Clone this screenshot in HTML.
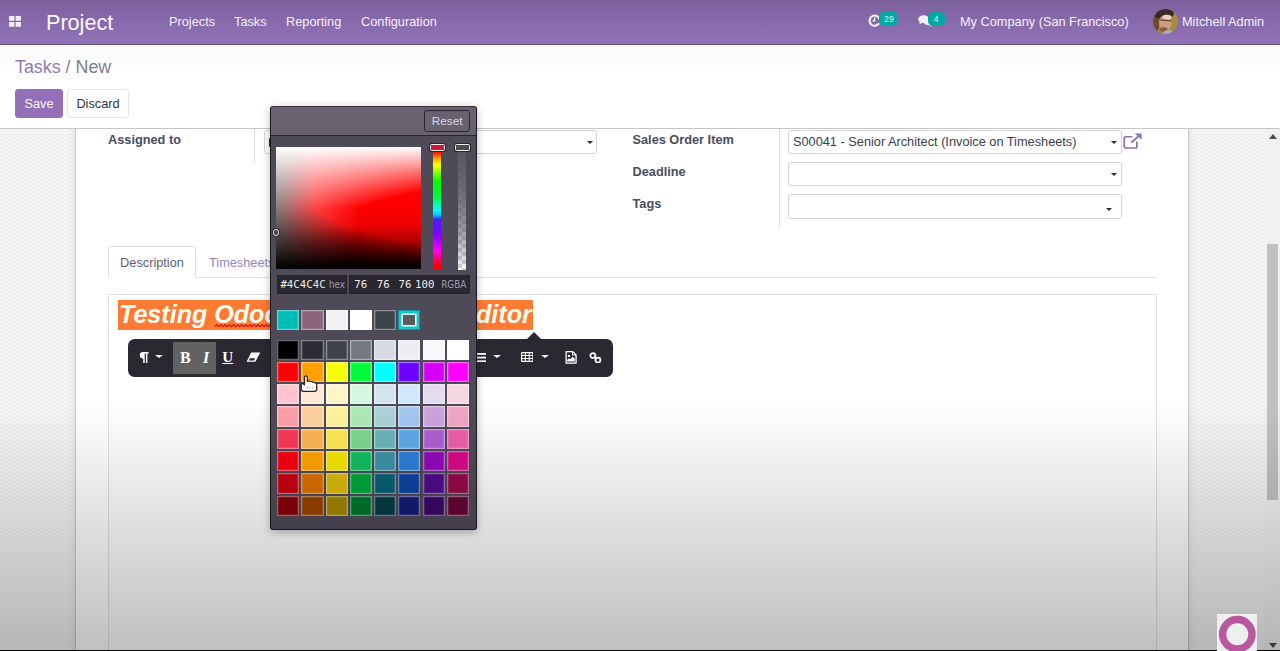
<!DOCTYPE html>
<html lang="en">
<head>
<meta charset="utf-8">
<title>Odoo - Tasks / New</title>
<style>
*{box-sizing:border-box;margin:0;padding:0}
html,body{width:1280px;height:651px;overflow:hidden;background:#fff}
body{position:relative;font-family:"Liberation Sans",Arial,sans-serif;font-size:12.75px;color:#4c4c4c;line-height:1.5}
.abs{position:absolute}
/* ---------- navbar ---------- */
#navbar{position:absolute;left:0;top:0;width:1280px;height:45px;background:linear-gradient(to bottom,#7a609b 0%,#8366a6 30%,#9174b7 100%);border-bottom:1px solid #64507f;color:#f3ecfa}
#navbar .apps{position:absolute;left:9px;top:16px;width:12px;height:11px}
#navbar .brand{position:absolute;left:46px;top:7.6px;font-size:21.6px;line-height:30px;color:#fbf7ff;white-space:nowrap}
#navbar .menu{position:absolute;top:0;height:44px;line-height:44.2px;font-size:12.75px;white-space:nowrap;color:#f5effb}
#navbar .badge{position:absolute;top:12px;height:14px;border-radius:5px;background:#04a8a2;color:#c9fbfa;font-size:8.6px;line-height:14px;text-align:center}
#avatar{position:absolute;left:1153px;top:9px;width:25px;height:25px;border-radius:50%;overflow:hidden;background:#8a6a45}
/* ---------- control panel ---------- */
#cp{position:absolute;left:0;top:45px;width:1280px;height:84px;background:#fff;border-bottom:1px solid #c6c6c6}
#cp .crumb{position:absolute;left:15px;top:9px;font-size:17.85px;line-height:27px;white-space:nowrap;color:#7c7f89}
#cp .crumb a{color:#8f7bb8;text-decoration:none}
.btn{position:absolute;top:44px;height:29px;border-radius:3px;font-size:12.75px;line-height:27px;text-align:center;border:1px solid transparent;white-space:nowrap}
.btn-primary{left:15px;width:48px;background:#9370b8;border-color:#9370b8;color:#fbf7ff}
.btn-secondary{left:67px;width:62px;background:#fff;border-color:#e6e6ea;color:#2f3246}
/* ---------- content ---------- */
#content{position:absolute;left:0;top:129px;width:1265px;height:522px;overflow:hidden;
 background-color:#f8f8f8;
 background-image:linear-gradient(45deg,#eeeeee 25%,transparent 25%,transparent 75%,#eeeeee 75%),linear-gradient(45deg,#eeeeee 25%,transparent 25%,transparent 75%,#eeeeee 75%);
 background-size:4px 4px;background-position:0 0,2px 2px}
#sheet{position:absolute;left:75px;top:-1px;width:1114px;height:560px;background:#fff;border:1px solid #c8c8d2;box-shadow:0 0 6px rgba(90,90,120,.18)}
.lbl{position:absolute;font-weight:bold;font-size:12.75px;line-height:20px;color:#4a4d5e;white-space:nowrap}
.vsep{position:absolute;width:1px;background:#dcdcdc}
.inp{position:absolute;height:24px;border:1px solid #d5d5d8;border-radius:3px;background:#fff;font-size:12.75px;line-height:22px;color:#3a3d4c;padding-left:4px;white-space:nowrap;overflow:hidden}
.caret{position:absolute;width:0;height:0;border-left:3.8px solid transparent;border-right:3.8px solid transparent;border-top:3.8px solid #2d2d2d;margin:.8px 0 0 .6px}
/* tabs */
#tabs{position:absolute;left:32px;top:117px;width:1049px;height:32px;border-bottom:1px solid #dee2e6}
#tabs .tab{position:absolute;top:0;height:32px;line-height:31px;font-size:12.75px;white-space:nowrap}
#tabs .active{left:0;width:88px;text-align:center;border:1px solid #dee2e6;border-bottom-color:#fff;border-radius:3px 3px 0 0;background:#fff;color:#5e6170}
#tabs .other{left:101px;top:1px;color:#9585be}
#editor{position:absolute;left:32px;top:165px;width:1049px;height:400px;border:1px solid #e2e2e2;background:#fff}
#editor h2{position:absolute;left:9px;top:4.6px;height:30px;font-size:25.1px;line-height:28.4px;font-weight:bold;font-style:italic;color:#fffdf0;background:#ff7a33;white-space:nowrap;padding:0 1px}
#editor h2 u{text-decoration:none}
#editor h2 svg{position:absolute;left:96.6px;top:24.2px}
/* toolbar */
#toolbar{position:absolute;left:128px;top:339px;width:484.9px;height:37.6px;border-radius:6.5px;background:#2c2831;color:#fff}
#toolbar .tip{position:absolute;left:399px;top:-7px;width:0;height:0;border-left:7px solid transparent;border-right:7px solid transparent;border-bottom:7px solid #2c2831}
#toolbar .on{position:absolute;left:45px;top:3px;width:43px;height:32px;background:#626262}
#toolbar svg{position:absolute}
#toolbar .tc{position:absolute;width:0;height:0;border-left:4px solid transparent;border-right:4px solid transparent;border-top:3.6px solid #fff;top:16px}
#toolbar .g{position:absolute;font-family:"Liberation Serif","DejaVu Serif",serif;font-size:16px;line-height:20px;color:#fff;top:9.3px}
/* colour picker popover */
#picker{position:absolute;left:270px;top:106px;width:207px;height:423.6px;background:#4f4a57;border:1px solid #1c191f;border-top-color:#37333c;border-radius:3px;box-shadow:0 2px 9px rgba(0,0,0,.28)}
#picker .head{position:absolute;left:0;top:0;width:205px;height:29px;background:#676170;border-bottom:1px solid #2a2630;border-radius:2px 2px 0 0}
#picker .reset{position:absolute;left:153.4px;top:3.4px;width:45.6px;height:21.4px;border:1px solid #2a2630;border-radius:3px;background:#676170;color:#ddd8e2;font-size:11.75px;line-height:19.4px;text-align:center}
#sv{position:absolute;left:5.3px;top:40px;width:145px;height:122px;background-color:#f00;background-image:linear-gradient(to bottom,#fff 0%,rgba(255,255,255,0) 50%,rgba(0,0,0,0) 50%,#000 100%),linear-gradient(to right,#808080 0%,rgba(128,128,128,0) 100%);filter:saturate(2.7)}
#svd{position:absolute;left:5.3px;top:40px;width:145px;height:122px;background:linear-gradient(to bottom,rgba(0,0,0,0) 50%,rgba(0,0,0,.07) 64%,rgba(0,0,0,.36) 80%,rgba(0,0,0,.52) 90%,rgba(0,0,0,.7) 100%);-webkit-mask-image:linear-gradient(to right,rgba(0,0,0,0) 0%,#000 55%);mask-image:linear-gradient(to right,rgba(0,0,0,0) 0%,#000 55%)}
#svp{position:absolute;left:1.5px;top:122.3px;width:6.8px;height:6.8px;border-radius:50%;border:1.5px solid #e6e6e6;box-shadow:0 0 0 1px rgba(40,40,40,.8),inset 0 0 0 1px rgba(40,40,40,.8)}
#hue{position:absolute;left:162px;top:41px;width:8.4px;height:122px;background:linear-gradient(to bottom,#f00 0%,#f00 3%,#ffb000 9%,#ff0 14%,#0f0 27%,#00f840 40%,#0ff 51%,#00c8ff 55%,#4a1cff 58.5%,#7a00ff 70%,#f0f 84%,#f00 96%,#f00 100%)}
#alpha{position:absolute;left:187px;top:41px;width:8.4px;height:122px;background-color:#fff;
 background-image:linear-gradient(to bottom,#58545e 0%,rgba(88,84,94,.86) 35%,rgba(88,84,94,.62) 65%,rgba(88,84,94,.18) 92%,rgba(88,84,94,0) 100%),linear-gradient(45deg,#d4d4d4 25%,transparent 25%,transparent 75%,#d4d4d4 75%),linear-gradient(45deg,#d4d4d4 25%,transparent 25%,transparent 75%,#d4d4d4 75%);
 background-size:auto,8px 8px,8px 8px;background-position:0 0,0 0,4px 4px}
.hdl{position:absolute;top:36.5px;width:15px;height:7px;border:1.2px solid #f1f1f1;border-radius:1.5px;box-shadow:0 0 0 1px #2a2630}
.cbox{position:absolute;top:168.1px;height:19.3px;background:#2b2730;border:1px solid #26222b;color:#eee;font-family:"DejaVu Sans Mono","Liberation Mono",monospace;font-size:10.75px;line-height:17.6px;white-space:pre}
.cbox b{position:absolute;top:0;font-weight:normal;text-align:right}
.cbox i{position:absolute;top:0;font-style:normal;font-family:"DejaVu Sans Condensed","DejaVu Sans","Liberation Sans",sans-serif;color:#a29ea9;font-size:9.8px}
.sw{position:absolute;width:24.2px;height:22.3px;border:solid #4f4a57;border-width:.7px .6px;box-shadow:inset 0 0 0 1.3px rgba(255,255,255,.4)}
.sw.sel{box-shadow:inset 0 0 0 1px #0e94a2,inset 0 0 0 3.4px #14c6cb,inset 0 0 0 5px #e4ffff}
#cursor{position:absolute;left:300px;top:374px;width:18px;height:20px}
/* overlays */
#scroll{position:absolute;left:1265px;top:129px;width:15px;height:522px;background:#f1f1f1}
#scroll .thumb{position:absolute;left:2px;top:115px;width:11px;height:256px;background:#c1c1c1}
#shade-top{position:absolute;left:0;top:46px;width:1280px;height:24px;background:linear-gradient(to bottom,rgba(0,0,0,.022),rgba(0,0,0,0));pointer-events:none}
#shade-bot{position:absolute;left:0;top:400px;width:1280px;height:251px;background:linear-gradient(to bottom,rgba(0,0,0,0),rgba(0,0,0,.25));pointer-events:none}
#botline{position:absolute;left:0;top:650px;width:1280px;height:1px;background:#050505}
#wm{position:absolute;left:1217px;top:614px;width:40px;height:37px;background:#efefef;overflow:hidden}
</style>
</head>
<body>

<!-- ================= NAVBAR ================= -->
<div id="navbar">
  <svg class="apps" viewBox="0 0 12 11"><rect x="0" y="0" width="5.4" height="4.8" rx=".6" fill="#f4eefa"/><rect x="6.6" y="0" width="5.4" height="4.8" rx=".6" fill="#f4eefa"/><rect x="0" y="6" width="5.4" height="4.8" rx=".6" fill="#f4eefa"/><rect x="6.6" y="6" width="5.4" height="4.8" rx=".6" fill="#f4eefa"/></svg>
  <div class="brand">Project</div>
  <div class="menu" style="left:169px">Projects</div>
  <div class="menu" style="left:234px">Tasks</div>
  <div class="menu" style="left:286px">Reporting</div>
  <div class="menu" style="left:361px">Configuration</div>

  <svg class="abs" style="left:868.2px;top:14.4px" width="13" height="13" viewBox="0 0 13 13"><path d="M10.6 9.9A5.1 5.1 0 1 1 11.6 5.4" fill="none" stroke="#f4eefa" stroke-width="2.1" stroke-linecap="round"/><path d="M6.6 3.6V6.8H4.6" fill="none" stroke="#f4eefa" stroke-width="1.4"/></svg>
  <div class="badge" style="left:879.4px;width:19px">29</div>
  <svg class="abs" style="left:918px;top:15px" width="15" height="12" viewBox="0 0 15 12"><ellipse cx="5.6" cy="4.2" rx="5.4" ry="3.9" fill="#f4eefa"/><path d="M2 6.5L1.2 9.6L4.8 7.6Z" fill="#f4eefa"/><ellipse cx="10.2" cy="7" rx="4.2" ry="3" fill="#f4eefa"/><path d="M12 9.2L13.8 11.6L10 10Z" fill="#f4eefa"/></svg>
  <div class="badge" style="left:927.6px;width:17.2px">4</div>
  <div class="menu" style="left:960px">My Company (San Francisco)</div>
  <div id="avatar">
    <svg width="25" height="25" viewBox="0 0 25 25"><defs><filter id="avb" x="-10%" y="-10%" width="120%" height="120%"><feGaussianBlur stdDeviation=".75"/></filter></defs><rect width="25" height="25" fill="#a58c3e"/><g filter="url(#avb)"><rect x="-2" y="-2" width="29" height="29" fill="#a58c3e"/><ellipse cx="2.5" cy="13" rx="4" ry="10" fill="#6e4a2c"/><ellipse cx="10.5" cy="4.6" rx="10.5" ry="5.6" fill="#382b2a"/><ellipse cx="12.3" cy="14" rx="6.2" ry="8.2" fill="#cd9c84"/><ellipse cx="14.2" cy="8.3" rx="4.4" ry="2.5" fill="#edd2c4"/><path d="M7.4 10.8L18.2 11.8" stroke="#5a4038" stroke-width="1.3"/><ellipse cx="10.6" cy="20.4" rx="4" ry="2.2" fill="#8a583e"/><ellipse cx="15.4" cy="24.2" rx="5.2" ry="3.2" fill="#a6aebe"/></g></svg>
  </div>
  <div class="menu" style="left:1182px">Mitchell Admin</div>
</div>

<!-- ================= CONTROL PANEL ================= -->
<div id="cp">
  <div class="crumb"><a>Tasks</a> / New</div>
  <div class="btn btn-primary">Save</div>
  <div class="btn btn-secondary">Discard</div>
</div>

<!-- ================= CONTENT ================= -->
<div id="content">
  <div id="sheet">
    <div class="lbl" style="left:32px;top:1px">Assigned to</div>
    <div class="vsep" style="left:178px;top:0;height:33px"></div>
    <div class="inp" style="left:188px;top:1px;width:333px"></div>
    <div class="caret" style="left:510px;top:11px"></div>
    <div class="abs" style="left:193.2px;top:9px;width:2px;height:9px;background:#2a2a30;border-radius:1px"></div>

    <div class="lbl" style="left:556.5px;top:1px">Sales Order Item</div>
    <div class="lbl" style="left:556.5px;top:33px">Deadline</div>
    <div class="lbl" style="left:556.5px;top:65px">Tags</div>
    <div class="vsep" style="left:703px;top:0;height:98px"></div>
    <div class="inp" style="left:712px;top:1px;width:334px">S00041 - Senior Architect (Invoice on Timesheets)</div>
    <div class="caret" style="left:1034px;top:11px"></div>
    <svg class="abs" style="left:1046.4px;top:3px" width="21.5" height="18" viewBox="0 0 19 18" preserveAspectRatio="none"><path d="M13.2 10.2V14.4Q13.2 16 11.6 16H3.6Q2 16 2 14.4V6.4Q2 4.8 3.6 4.8H8.6" fill="none" stroke="#8e73b6" stroke-width="1.6" stroke-linecap="round"/><path d="M8.2 10.6L16 2.8" fill="none" stroke="#8e73b6" stroke-width="1.9"/><path d="M11.2 1.6H17.4V7.8Z" fill="#8e73b6"/></svg>
    <div class="inp" style="left:712px;top:33px;width:334px"></div>
    <div class="caret" style="left:1034px;top:43px"></div>
    <div class="inp" style="left:712px;top:65px;width:334px;height:25px"></div>
    <div class="caret" style="left:1029px;top:78.2px"></div>

    <div id="tabs">
      <div class="tab active">Description</div>
      <div class="tab other">Timesheets</div>
    </div>
    <div id="editor">
      <h2>Testing <u>Odoo</u> <span style="letter-spacing:.78px">Rich Content</span> Editor<svg width="64" height="4" viewBox="0 0 64 4"><path d="M0 2.6L2.05 0.7L4.1 2.6L6.15 0.7L8.2 2.6L10.25 0.7L12.3 2.6L14.35 0.7L16.4 2.6L18.45 0.7L20.5 2.6L22.55 0.7L24.6 2.6L26.65 0.7L28.7 2.6L30.75 0.7L32.8 2.6L34.85 0.7L36.9 2.6L38.95 0.7L41 2.6L43.05 0.7L45.1 2.6L47.15 0.7L49.2 2.6L51.25 0.7L53.3 2.6L55.35 0.7L57.4 2.6L59.45 0.7L61.5 2.6" fill="none" stroke="#e10f0f" stroke-width="1.25" stroke-linejoin="round"/></svg></h2>
    </div>
  </div>
</div>

<!-- ================= SCROLLBAR ================= -->
<div id="scroll">
  <svg class="abs" style="left:4px;top:5px" width="8" height="5" viewBox="0 0 8 5"><path d="M0 5L4 0L8 5Z" fill="#4d4d4d"/></svg>
  <div class="thumb"></div>
  <svg class="abs" style="left:4px;top:514px" width="8" height="5" viewBox="0 0 8 5"><path d="M0 0L4 5L8 0Z" fill="#4d4d4d"/></svg>
</div>

<!-- ================= FLOATING TOOLBAR ================= -->
<div id="toolbar">
  <div class="tip"></div>
  <div class="on"></div>
  <!-- paragraph style -->
  <svg style="left:11.4px;top:13.4px" width="10" height="11" viewBox="0 0 10 11"><path d="M4.1 0H9.6V1.5H8.4V11H6.9V1.5H5.7V11H4.2V6.6H4.1A3.3 3.3 0 0 1 4.1 0Z" fill="#fff"/></svg>
  <div class="tc" style="left:27px"></div>
  <!-- bold / italic / underline -->
  <div class="g" style="left:52px;font-weight:bold">B</div>
  <div class="g" style="left:75px;font-style:italic;font-weight:bold">I</div>
  <div class="g" style="left:94.3px;top:7.8px;font-weight:bold;font-size:15.2px;text-decoration:underline;text-underline-offset:.6px;text-decoration-thickness:1.3px">U</div>
  <!-- eraser -->
  <svg style="left:118px;top:13px" width="15" height="11" viewBox="0 0 15 11"><path d="M5.2 .6H14.2L9.4 9.8H.6Z" fill="#fff"/><path d="M3.9 6.2H9.1L8 8.4H2.7Z" fill="#2c2831"/></svg>
  <!-- font size / colours (hidden behind palette) -->
  <div class="g" style="left:150px;font-family:'Liberation Sans',sans-serif;font-size:12px">13</div>
  <div class="tc" style="left:168px"></div>
  <div class="g" style="left:196px;font-family:'Liberation Sans',sans-serif;font-size:13px;font-weight:bold">A</div>
  <div class="tc" style="left:210px"></div>
  <!-- lists / align -->
  <svg style="left:346px;top:14px" width="12" height="9.2" viewBox="0 0 12 10" preserveAspectRatio="none"><rect y="0" width="12" height="2" fill="#fff"/><rect y="4" width="12" height="2" fill="#fff"/><rect y="8" width="12" height="2" fill="#fff"/></svg>
  <div class="tc" style="left:365px"></div>
  <!-- table -->
  <svg style="left:392.5px;top:13.1px" width="12.6" height="10" viewBox="0 0 13 11" preserveAspectRatio="none"><rect x=".6" y=".6" width="11.8" height="9.8" rx="1" fill="none" stroke="#fff" stroke-width="1.3"/><path d="M.6 3.9H12.4M.6 7.1H12.4M4.5 .6V10.4M8.5 .6V10.4" stroke="#fff" stroke-width="1.1" fill="none"/></svg>
  <div class="tc" style="left:413px"></div>
  <!-- image -->
  <svg style="left:436.8px;top:12.2px" width="12" height="12.8" viewBox="0 0 13 14" preserveAspectRatio="none"><path d="M1.2 .7H8.4L12 4.3V13.2H1.2Z" fill="none" stroke="#fff" stroke-width="1.4" stroke-linejoin="round"/><path d="M8.2 .8V4.5H11.9" fill="none" stroke="#fff" stroke-width="1.1"/><circle cx="4.3" cy="5.4" r="1.3" fill="#fff"/><path d="M2.4 11.6V9.6L4.4 7.8L5.6 8.9L8.4 6.2L10.6 8.4V11.6Z" fill="#fff"/></svg>
  <!-- link -->
  <svg style="left:460.6px;top:12.7px" width="13" height="11.8" viewBox="0 0 14 13" preserveAspectRatio="none"><circle cx="4.2" cy="3.9" r="2.7" fill="none" stroke="#fff" stroke-width="1.9"/><circle cx="9.6" cy="8.9" r="2.7" fill="none" stroke="#fff" stroke-width="1.9"/><path d="M5.6 5.2L8.3 7.7" stroke="#fff" stroke-width="2" fill="none"/></svg>
</div>

<!-- ================= COLOUR PICKER ================= -->
<div id="picker">
  <div class="head"><div class="reset">Reset</div></div>
  <div id="sv"></div><div id="svd"></div><div id="svp"></div>
  <div id="hue"></div><div class="hdl" style="left:159px;background:#d4143a"></div>
  <div id="alpha"></div><div class="hdl" style="left:184px;background:#4c4c4c"></div>
  <div class="cbox" style="left:6.4px;width:69.5px"><b style="left:2px">#4C4C4C</b><i style="left:50.6px">hex</i></div>
  <div class="cbox" style="left:77.8px;width:121px"><b style="right:101.6px">76</b><b style="right:79.2px">76</b><b style="right:57.4px">76</b><b style="right:34.4px">100</b><i style="left:91.4px">RGBA</i></div>
  <div id="swatches">
  <!-- custom colours -->
  <div class="sw" style="left:5.2px;top:202px;background:#00bcb4"></div>
  <div class="sw" style="left:29.4px;top:202px;background:#8a647c"></div>
  <div class="sw" style="left:53.6px;top:202px;background:#f2f2f6"></div>
  <div class="sw" style="left:77.9px;top:202px;background:#ffffff"></div>
  <div class="sw" style="left:102.1px;top:202px;background:#3e444c"></div>
  <div class="sw sel" style="left:126.3px;top:202px;background:#5b5b5b"></div>
  <!-- palette grid -->
  <div class="sw" style="left:5.2px;top:231.5px;background:#000000"></div>
  <div class="sw" style="left:29.4px;top:231.5px;background:#2c2c35"></div>
  <div class="sw" style="left:53.6px;top:231.5px;background:#3e434b"></div>
  <div class="sw" style="left:77.9px;top:231.5px;background:#76787f"></div>
  <div class="sw" style="left:102.1px;top:231.5px;background:#d6dae2"></div>
  <div class="sw" style="left:126.3px;top:231.5px;background:#ececf2"></div>
  <div class="sw" style="left:150.5px;top:231.5px;background:#f8f8fb"></div>
  <div class="sw" style="left:174.7px;top:231.5px;background:#ffffff"></div>
  <div class="sw" style="left:5.2px;top:253.8px;background:#ff0000"></div>
  <div class="sw" style="left:29.4px;top:253.8px;background:#ffa000"></div>
  <div class="sw" style="left:53.6px;top:253.8px;background:#f6fc0a"></div>
  <div class="sw" style="left:77.9px;top:253.8px;background:#00fa38"></div>
  <div class="sw" style="left:102.1px;top:253.8px;background:#00ffff"></div>
  <div class="sw" style="left:126.3px;top:253.8px;background:#6a00ff"></div>
  <div class="sw" style="left:150.5px;top:253.8px;background:#d400f4"></div>
  <div class="sw" style="left:174.7px;top:253.8px;background:#ff00ff"></div>
  <div class="sw" style="left:5.2px;top:276.1px;background:#ffc4d2"></div>
  <div class="sw" style="left:29.4px;top:276.1px;background:#ffe8d4"></div>
  <div class="sw" style="left:53.6px;top:276.1px;background:#fff6c8"></div>
  <div class="sw" style="left:77.9px;top:276.1px;background:#d4f8e0"></div>
  <div class="sw" style="left:102.1px;top:276.1px;background:#d4e4ee"></div>
  <div class="sw" style="left:126.3px;top:276.1px;background:#d0e8fa"></div>
  <div class="sw" style="left:150.5px;top:276.1px;background:#e2dcee"></div>
  <div class="sw" style="left:174.7px;top:276.1px;background:#f4d8e0"></div>
  <div class="sw" style="left:5.2px;top:298.4px;background:#ff9fab"></div>
  <div class="sw" style="left:29.4px;top:298.4px;background:#ffd29f"></div>
  <div class="sw" style="left:53.6px;top:298.4px;background:#fff49d"></div>
  <div class="sw" style="left:77.9px;top:298.4px;background:#abeab7"></div>
  <div class="sw" style="left:102.1px;top:298.4px;background:#abd3d8"></div>
  <div class="sw" style="left:126.3px;top:298.4px;background:#a3c7f2"></div>
  <div class="sw" style="left:150.5px;top:298.4px;background:#cda3dc"></div>
  <div class="sw" style="left:174.7px;top:298.4px;background:#f0a7c3"></div>
  <div class="sw" style="left:5.2px;top:320.7px;background:#fa3758"></div>
  <div class="sw" style="left:29.4px;top:320.7px;background:#ffb751"></div>
  <div class="sw" style="left:53.6px;top:320.7px;background:#ffe951"></div>
  <div class="sw" style="left:77.9px;top:320.7px;background:#7dd890"></div>
  <div class="sw" style="left:102.1px;top:320.7px;background:#6ab7bb"></div>
  <div class="sw" style="left:126.3px;top:320.7px;background:#5eabe9"></div>
  <div class="sw" style="left:150.5px;top:320.7px;background:#af60d4"></div>
  <div class="sw" style="left:174.7px;top:320.7px;background:#ed60ab"></div>
  <div class="sw" style="left:5.2px;top:343.0px;background:#f70010"></div>
  <div class="sw" style="left:29.4px;top:343.0px;background:#ffa400"></div>
  <div class="sw" style="left:53.6px;top:343.0px;background:#f9e600"></div>
  <div class="sw" style="left:77.9px;top:343.0px;background:#11c060"></div>
  <div class="sw" style="left:102.1px;top:343.0px;background:#3e93a6"></div>
  <div class="sw" style="left:126.3px;top:343.0px;background:#2d80d9"></div>
  <div class="sw" style="left:150.5px;top:343.0px;background:#9309bb"></div>
  <div class="sw" style="left:174.7px;top:343.0px;background:#d90988"></div>
  <div class="sw" style="left:5.2px;top:365.3px;background:#c9000f"></div>
  <div class="sw" style="left:29.4px;top:365.3px;background:#de6f00"></div>
  <div class="sw" style="left:53.6px;top:365.3px;background:#dab909"></div>
  <div class="sw" style="left:77.9px;top:365.3px;background:#00a63d"></div>
  <div class="sw" style="left:102.1px;top:365.3px;background:#096074"></div>
  <div class="sw" style="left:126.3px;top:365.3px;background:#0b44a1"></div>
  <div class="sw" style="left:150.5px;top:365.3px;background:#510b8c"></div>
  <div class="sw" style="left:174.7px;top:365.3px;background:#96094a"></div>
  <div class="sw" style="left:5.2px;top:387.6px;background:#880009"></div>
  <div class="sw" style="left:29.4px;top:387.6px;background:#9a4300"></div>
  <div class="sw" style="left:53.6px;top:387.6px;background:#a18600"></div>
  <div class="sw" style="left:77.9px;top:387.6px;background:#00762d"></div>
  <div class="sw" style="left:102.1px;top:387.6px;background:#043c45"></div>
  <div class="sw" style="left:126.3px;top:387.6px;background:#161b76"></div>
  <div class="sw" style="left:150.5px;top:387.6px;background:#3a0967"></div>
  <div class="sw" style="left:174.7px;top:387.6px;background:#650736"></div>
  </div>
</div>

<svg id="cursor" viewBox="0 0 18 20"><path d="M4.5 2.7Q5.9 1.1 7.3 2.7V7.3L9.4 7L11.8 7.6L14 8.3L15.9 9.2Q16.7 9.7 16.7 10.6V15.2Q16.7 17.3 14.6 17.3H3.4Q1.3 17.3 1.3 15.2V10.6Q1.3 9.3 2.6 9.5L4.5 10.8Z" fill="#fff" stroke="#2b231f" stroke-width="1.25" stroke-linejoin="round"/><path d="M7.4 12.6V14.6M9.9 12.6V14.6M12.4 12.6V14.6" stroke="#9a9a9a" stroke-width=".8"/></svg>
<div id="shade-top"></div>
<div id="shade-bot"></div>
<div id="botline"></div>
<div id="wm"><svg width="40" height="37" viewBox="0 0 40 37"><circle cx="20.3" cy="20.2" r="14.7" fill="none" stroke="#b9589e" stroke-width="7.4"/></svg></div>
</body>
</html>
